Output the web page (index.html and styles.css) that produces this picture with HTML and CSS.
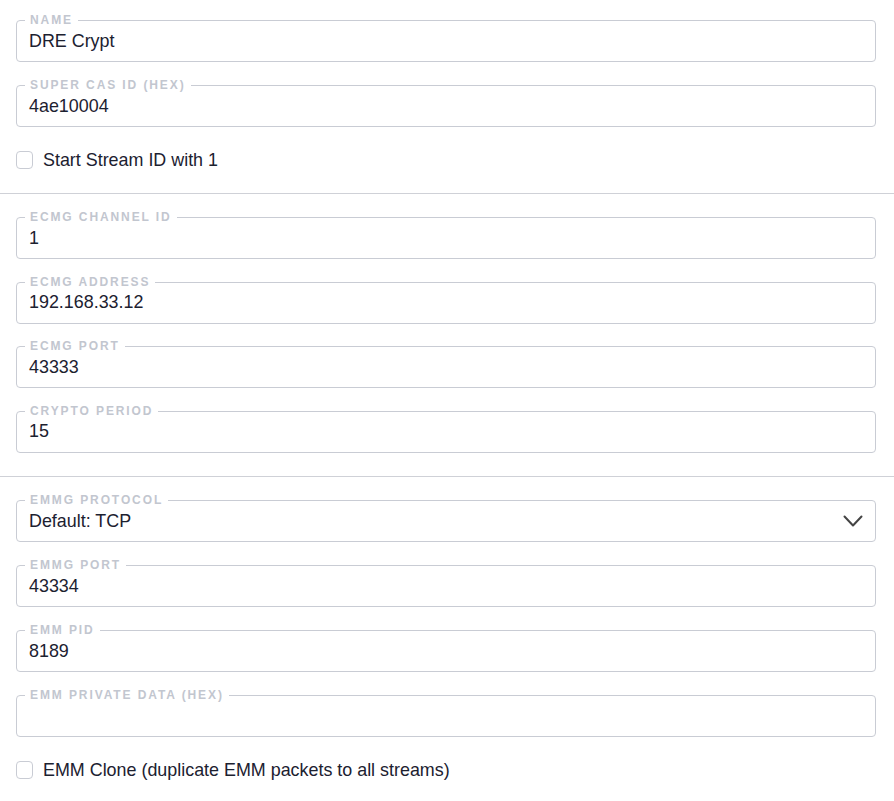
FILE: index.html
```html
<!DOCTYPE html>
<html>
<head>
<meta charset="utf-8">
<link rel="stylesheet" href="styles.css">
</head>
<body>
<div class="form">
  <section class="group">
    <div class="field"><span class="label">Name</span><div class="value">DRE Crypt</div></div>
    <div class="field"><span class="label">Super CAS ID (hex)</span><div class="value">4ae10004</div></div>
    <label class="check"><span class="box"></span><span class="check-text">Start Stream ID with 1</span></label>
  </section>
  <hr class="divider">
  <section class="group tight">
    <div class="field"><span class="label">ECMG Channel ID</span><div class="value">1</div></div>
    <div class="field"><span class="label">ECMG Address</span><div class="value">192.168.33.12</div></div>
    <div class="field"><span class="label">ECMG Port</span><div class="value">43333</div></div>
    <div class="field"><span class="label">Crypto Period</span><div class="value">15</div></div>
  </section>
  <hr class="divider">
  <section class="group">
    <div class="field select"><span class="label">EMMG Protocol</span><div class="value">Default: TCP</div>
      <svg class="chevron" width="20" height="14" viewBox="0 0 20 14"><path d="M1.5 2.5 L10 11.5 L18.5 2.5" fill="none" stroke="#444" stroke-width="2" stroke-linecap="round" stroke-linejoin="round"/></svg>
    </div>
    <div class="field"><span class="label">EMMG Port</span><div class="value">43334</div></div>
    <div class="field"><span class="label">EMM PID</span><div class="value">8189</div></div>
    <div class="field"><span class="label">EMM Private Data (hex)</span><div class="value"></div></div>
    <label class="check"><span class="box"></span><span class="check-text">EMM Clone (duplicate EMM packets to all streams)</span></label>
  </section>
</div>
</body>
</html>
```

FILE: styles.css
```css
* { box-sizing: border-box; }
html, body { margin: 0; padding: 0; background: #fff; }
body {
  font-family: "Liberation Sans", Arial, sans-serif;
  color: #1c2130;
}
.form {
  width: 894px;
}
.group {
  padding: 0 18px 0 16px;
  display: flex;
  flex-direction: column;
}
.form > .group:first-child { padding-top: 20px; }
.field {
  position: relative;
  height: 42px;
  border: 1px solid #c9ccd4;
  border-radius: 4px;
  margin-bottom: 23px;
  display: flex;
  align-items: center;
  padding-left: 12px;
}
.tight .field { margin-bottom: 22.67px; }
.tight .field:last-child { margin-bottom: 23.5px; }
.label {
  position: absolute;
  top: -8px;
  left: 8px;
  padding: 0 5px;
  background: #fff;
  font-size: 12px;
  line-height: 14px;
  font-weight: bold;
  letter-spacing: 1.9px;
  text-transform: uppercase;
  color: #c2c6cf;
}
.value {
  font-size: 17.9px;
  line-height: 21px;
  color: #1c2130;
}
.select { justify-content: space-between; padding-right: 12px; }
.chevron { display: block; }
.check {
  display: flex;
  align-items: center;
  height: 24px;
  margin-top: -2px;
  margin-bottom: 21px;
}
.box {
  width: 17px;
  height: 18px;
  border: 1px solid #c9ccd4;
  border-radius: 4px;
  margin-right: 10px;
  flex: none;
}
.check-text {
  font-size: 17.9px;
  line-height: 21px;
  color: #1c2130;
}
.divider {
  margin: 0 0 23px 0;
  border: 0;
  border-top: 1px solid #cfd1d7;
  height: 0;
}
```
